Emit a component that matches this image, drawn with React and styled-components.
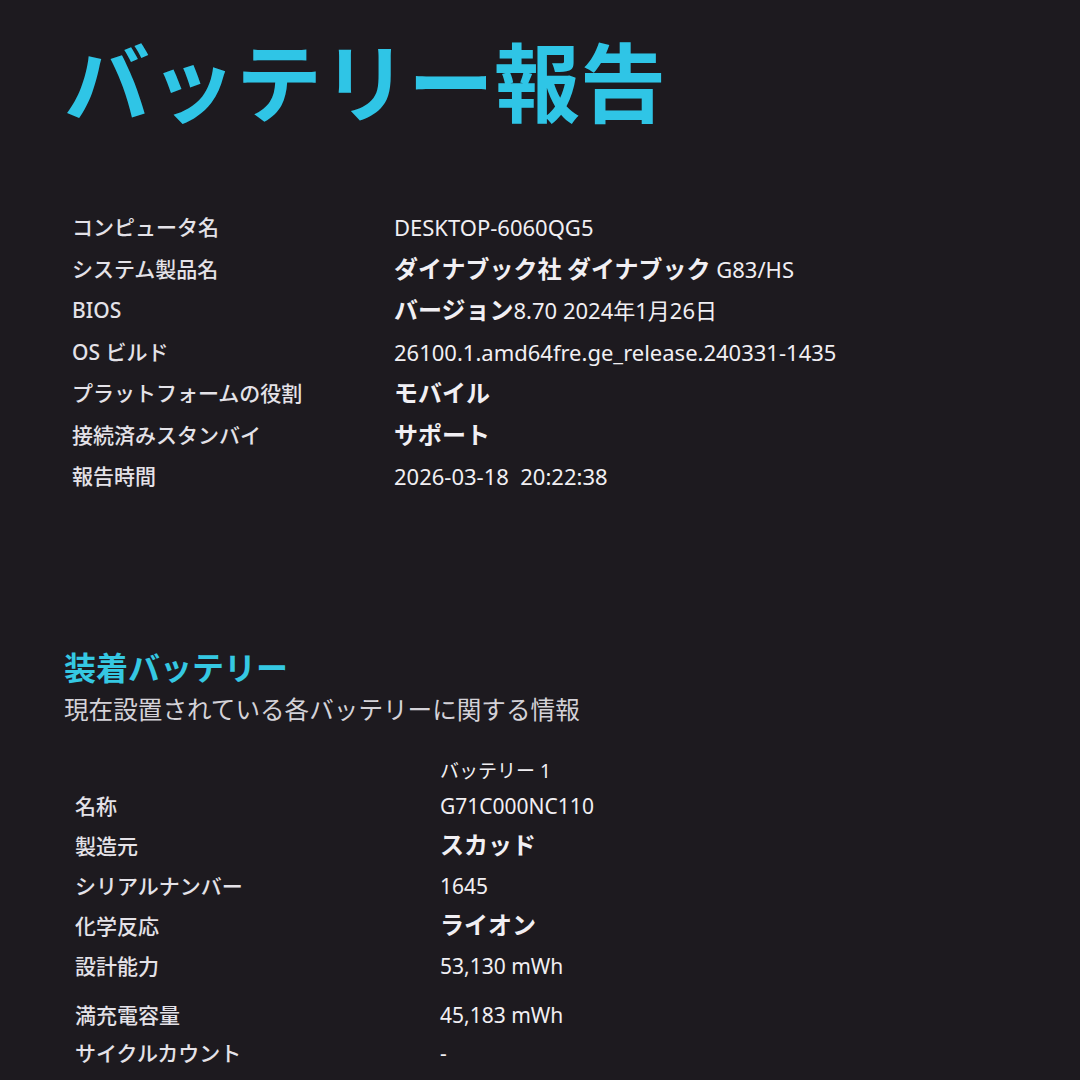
import styled, { createGlobalStyle } from "styled-components";

const GlobalStyle = createGlobalStyle`
  html, body {
    margin: 0;
    padding: 0;
    background: #1d1a1f;
  }
  body {
    font-family: "Noto Sans", "Noto Sans CJK JP", sans-serif;
    color: #ebe9ee;
  }
`

const Page = styled.div`
  width: 1080px;
  height: 1080px;
  overflow: hidden;
  padding: 35px 0 0 64px;
  box-sizing: border-box;
  background: #1d1a1f;
`

const Title = styled.h1`
  margin: 0;
  font-family: "Noto Sans CJK JP", sans-serif;
  font-size: 86px;
  line-height: 88px;
  font-weight: 700;
  color: #2fc5e6;
`

const Table = styled.div`
  display: grid;
  grid-template-columns: ${({ labelWidth }) => labelWidth}px auto;
  margin: ${({ top }) => top}px 0 0 ${({ indent }) => indent}px;
`

const Label = styled.div`
  font-family: "Noto Sans", "Noto Sans CJK JP", sans-serif;
  font-size: 21px;
  font-weight: 500;
  height: ${({ h }) => h}px;
  line-height: ${({ h }) => h}px;
  margin-top: ${({ gap }) => gap || 0}px;
  color: #e4e2e8;
  white-space: nowrap;
`

const Value = styled.div`
  font-family: "Noto Sans", "Noto Sans CJK JP", sans-serif;
  font-size: ${({ size }) => size}px;
  font-weight: 400;
  height: ${({ h }) => h}px;
  line-height: ${({ h }) => h}px;
  margin-top: ${({ gap }) => gap || 0}px;
  color: #f1eff3;
  white-space: pre;
`

const Strong = styled.span`
  font-family: "Noto Sans CJK JP", sans-serif;
  font-size: 24px;
  font-weight: 700;
  line-height: 1;
`

const Section = styled.h2`
  margin: 150px 0 0 0;
  font-family: "Noto Sans CJK JP", sans-serif;
  font-size: 32px;
  line-height: 36px;
  font-weight: 700;
  color: #35c8e2;
`

const Subtitle = styled.div`
  margin-top: 8px;
  font-family: "Noto Sans CJK JP", sans-serif;
  font-size: 24.6px;
  line-height: 32px;
  color: #d4d2d8;
`

const info = [
  ["コンピュータ名", "DESKTOP-6060QG5"],
  ["システム製品名", <><Strong>ダイナブック社 ダイナブック</Strong> G83/HS</>],
  ["BIOS", <><Strong>バージョン</Strong>8.70 2024年1月26日</>],
  ["OS ビルド", "26100.1.amd64fre.ge_release.240331-1435"],
  ["プラットフォームの役割", <Strong>モバイル</Strong>],
  ["接続済みスタンバイ", <Strong>サポート</Strong>],
  ["報告時間", "2026-03-18  20:22:38"],
]

const battery = [
  ["名称", "G71C000NC110"],
  ["製造元", <Strong>スカッド</Strong>],
  ["シリアルナンバー", "1645"],
  ["化学反応", <Strong>ライオン</Strong>],
  ["設計能力", "53,130 mWh"],
  ["満充電容量", "45,183 mWh", 9],
  ["サイクルカウント", "-", -2],
]

export default function App() {
  return (
    <>
      <GlobalStyle />
      <Page>
        <Title>バッテリー報告</Title>

        <Table labelWidth={322} indent={8} top={84}>
          {info.map(([k, v]) => (
            <>
              <Label key={k} h={41.5}>{k}</Label>
              <Value key={k + "v"} h={41.5} size={22}>{v}</Value>
            </>
          ))}
        </Table>

        <Section>装着バッテリー</Section>
        <Subtitle>現在設置されている各バッテリーに関する情報</Subtitle>

        <Table labelWidth={365} indent={11} top={32}>
          <Label h={30}></Label>
          <Value h={30} size={19}>バッテリー 1</Value>
          {battery.map(([k, v, gap]) => (
            <>
              <Label key={k} h={40} gap={gap}>{k}</Label>
              <Value key={k + "v"} h={40} gap={gap} size={21}>{v}</Value>
            </>
          ))}
        </Table>
      </Page>
    </>
  );
}
